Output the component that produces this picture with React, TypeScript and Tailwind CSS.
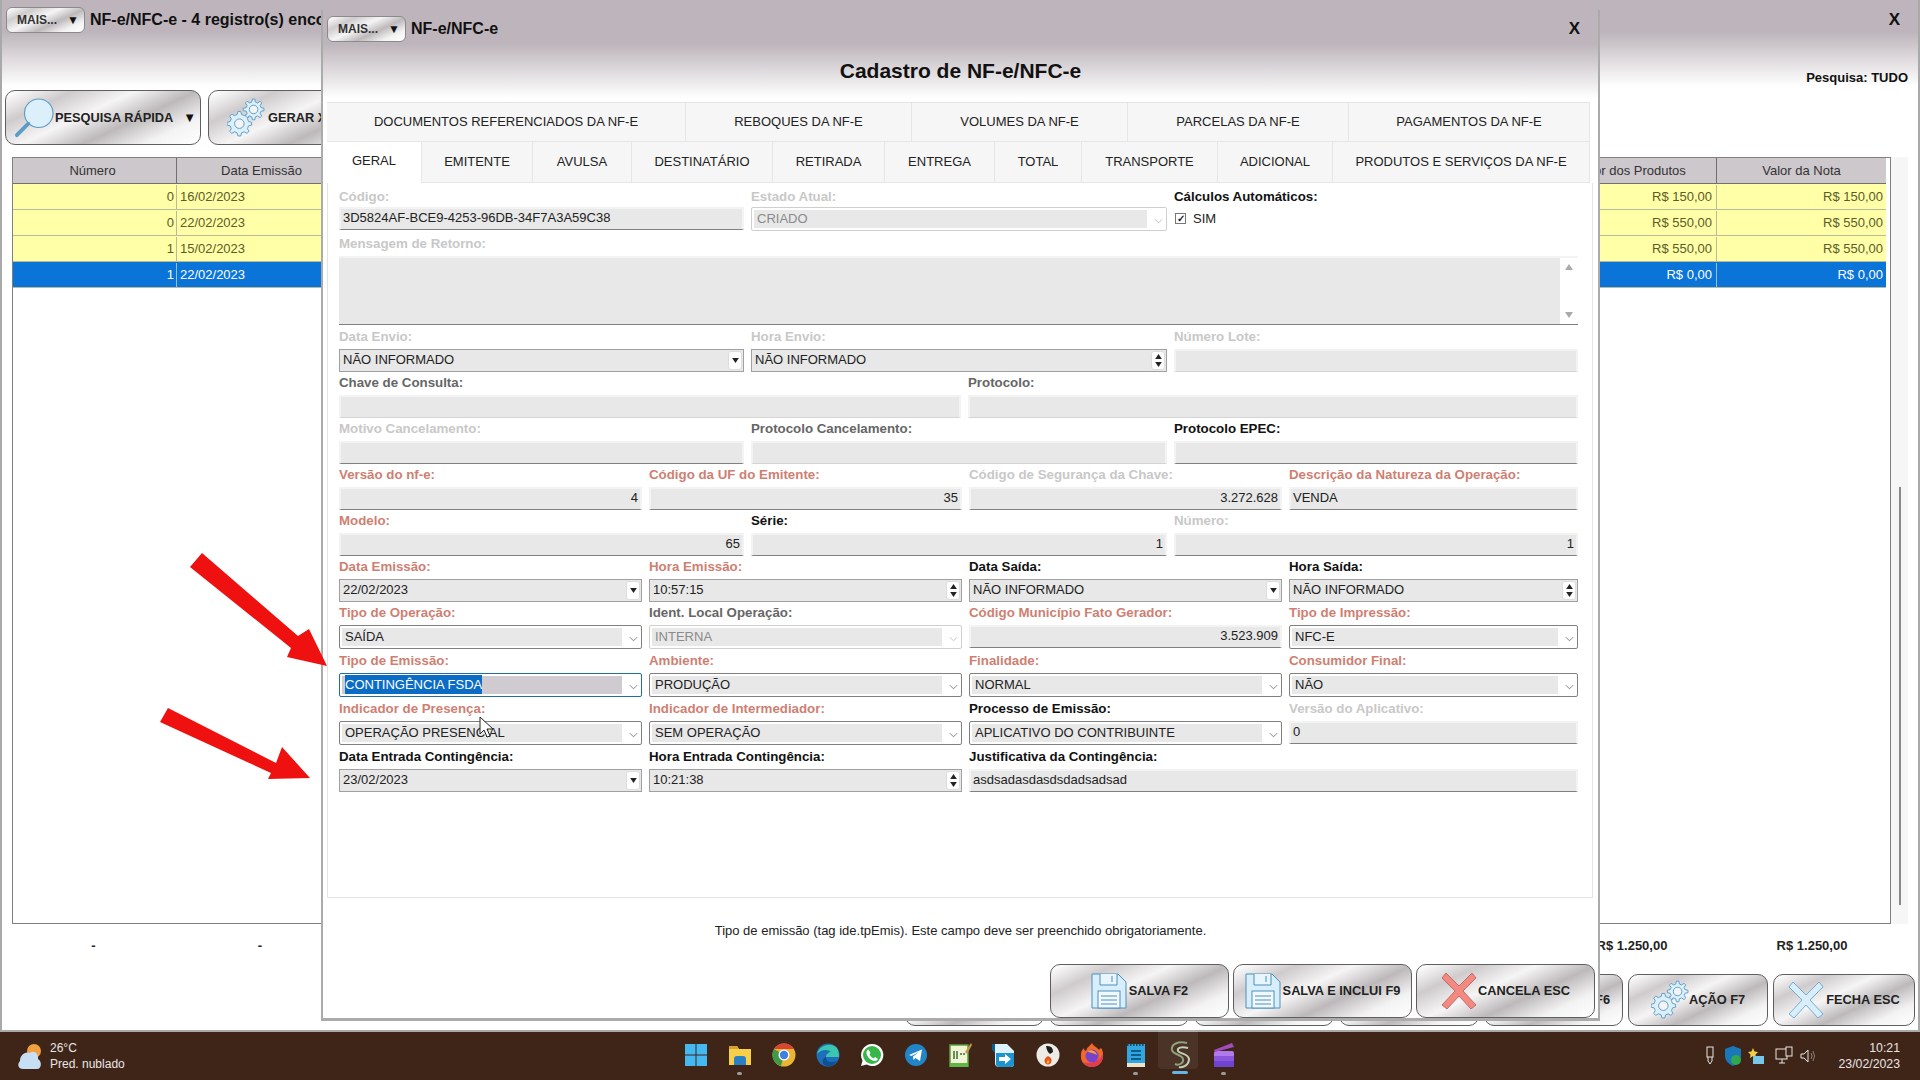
import React from "react";

const metal = "bg-[linear-gradient(155deg,#ffffff_2%,#cfcbcd_22%,#f6f5f5_42%,#bdb9bb_62%,#f4f3f3_82%,#ffffff_100%)]";

function gear(cx: number, cy: number, r: number, R: number, n: number) {
  let d = "";
  for (let i = 0; i < n; i++) {
    const s = (Math.PI * 2) / n;
    const a = i * s;
    const pts = [
      [a - s * 0.3, r],
      [a - s * 0.15, R],
      [a + s * 0.15, R],
      [a + s * 0.3, r],
    ];
    pts.forEach((p, j) => {
      const x = cx + Math.cos(p[0]) * p[1];
      const y = cy + Math.sin(p[0]) * p[1];
      d += (i === 0 && j === 0 ? "M" : "L") + x.toFixed(1) + " " + y.toFixed(1) + " ";
    });
  }
  return d + "Z";
}

function Gears() {
  return (
    <svg viewBox="0 0 40 42" className="w-[38px] h-[40px] shrink-0" fill="#dcf0fb" stroke="#5c9cc6" strokeWidth="1">
      <path d={gear(13, 27, 10, 13, 8)} />
      <circle cx="13" cy="27" r="5" fill="#f4f4f4" />
      <path d={gear(28, 12, 8, 11, 8)} />
      <circle cx="28" cy="12" r="4.5" fill="#f4f4f4" />
    </svg>
  );
}

function Floppy() {
  return (
    <svg viewBox="0 0 36 36" className="w-[36px] h-[36px] shrink-0" fill="#d8effb" stroke="#4d8fbd" strokeWidth="1">
      <path d="M1 1H27L35 9V35H1Z" />
      <path d="M9 1V12H26V1" fill="#e9f5fc" />
      <path d="M21 3V9" />
      <rect x="7" y="18" width="22" height="17" fill="#f2f9fd" />
      <path d="M10 23H26M10 27H26M10 31H26" />
    </svg>
  );
}

function XIcon({ fill, stroke }: { fill: string; stroke: string }) {
  return (
    <svg viewBox="0 0 36 36" className="w-[36px] h-[36px] shrink-0" fill={fill} stroke={stroke} strokeWidth="0.8">
      <path d="M5 0L18 13L31 0L35 5L22 18L35 32L30 36L18 23L6 36L1 32L14 18L1 5Z" />
    </svg>
  );
}

function Magnifier() {
  return (
    <svg viewBox="0 0 42 42" className="w-[40px] h-[40px] shrink-0" fill="#dcf0fb" stroke="#5c9cc6" strokeWidth="1.2">
      <circle cx="26" cy="16" r="15" />
      <path d="M15 27L3 39" strokeWidth="4" strokeLinecap="round" fill="none" />
    </svg>
  );
}

function MetalBtn({ className, children }: { className: string; children?: React.ReactNode }) {
  return (
    <div className={`${metal} border border-[#5f5f5f] rounded-[10px] flex items-center text-[12.8px] font-bold text-[#222] whitespace-nowrap overflow-hidden ${className}`}>
      {children}
    </div>
  );
}

function Mais({ className }: { className: string }) {
  return (
    <div className={`${metal} w-[79px] h-[26px] border border-[#8a8a8a] rounded-[6px] flex items-center justify-between pl-[10px] pr-[5px] text-[12px] font-bold text-[#333] shrink-0 ${className}`}>
      <span>MAIS...</span>
      <span className="text-[12px] text-[#111]">▼</span>
    </div>
  );
}

const labelTones: Record<string, string> = {
  r: "text-[#cf7f72]",
  g: "text-[#c8c8c8]",
  d: "text-[#666666]",
  k: "text-[#111111]",
};

function Label({ t, c, tight }: { t: string; c: string; tight?: boolean }) {
  return <div className={`${tight ? "h-[18px]" : "h-[20px]"} text-[13.3px] leading-[16px] font-bold whitespace-nowrap ${labelTones[c]}`}>{t}</div>;
}

function TextF({ l, c, v, right, soft, tight }: { l: string; c: string; v?: string; right?: boolean; soft?: boolean; tight?: boolean }) {
  return (
    <div>
      <Label t={l} c={c} tight={tight} />
      <div className={`h-[23px] bg-[#e8e8e8] border-t-2 border-x-2 border-[#f3f3f3] border-b ${soft ? "border-b-[#d4d4d4]" : "border-b-[#808080]"} flex items-center pb-[2px] px-[2px] text-[13px] text-[#222] ${right ? "justify-end" : ""}`}>
        {v}
      </div>
    </div>
  );
}

function Tri({ up }: { up?: boolean }) {
  return (
    <svg viewBox="0 0 8 6" className="w-[7px] h-[5px]">
      <path d={up ? "M4 0L8 6H0Z" : "M0 0H8L4 6Z"} fill="#222" />
    </svg>
  );
}

function Combo({ l, c, v, spin, soft }: { l: string; c: string; v: string; spin?: boolean; soft?: boolean }) {
  return (
    <div>
      <Label t={l} c={c} />
      <div className={`h-[23px] bg-[#e8e8e8] border ${soft ? "border-[#b0b0b0]" : "border-[#a0a0a0]"} flex items-center pl-[3px] pr-[1px] text-[13px] text-[#222]`}>
        <span className="flex-1 pb-[1px]">{v}</span>
        <div className="w-[14px] h-[19px] bg-white rounded-[3px] flex flex-col items-center justify-center gap-[3px] border border-[#dddddd]">
          {spin ? <Tri up /> : null}
          <Tri />
        </div>
      </div>
    </div>
  );
}

function Chevron({ color }: { color: string }) {
  return (
    <svg viewBox="0 0 10 6" className="w-[9px] h-[6px] mt-[4px]" fill="none" stroke={color} strokeWidth="1">
      <path d="M1 1L5 5L9 1" />
    </svg>
  );
}

function Sel({ l, c, v, disabled, focus, tight }: { l: string; c: string; v: string; disabled?: boolean; focus?: boolean; tight?: boolean }) {
  return (
    <div>
      <Label t={l} c={c} tight={tight} />
      <div className={`h-[24px] bg-white border rounded-[2px] flex items-stretch p-[2px] text-[13px] ${disabled ? "border-[#cfcfcf] text-[#8a8a8a]" : focus ? "border-[#1f6f9f] text-white" : "border-[#808080] text-[#222]"}`}>
        <div className={`flex-1 ${focus ? "bg-[#cfcbd0]" : "bg-[#e8e8e8]"} flex items-center pl-[3px] pb-[1px]`}>
          <span className={focus ? "bg-[#0b6cc6]" : ""}>{v}</span>
        </div>
        <div className="w-[17px] flex items-center justify-end pr-[1px]">
          <Chevron color={disabled ? "#c0c0c0" : "#777777"} />
        </div>
      </div>
    </div>
  );
}

function TabCell({ w, t, active }: { w: string; t: string; active?: boolean }) {
  return (
    <div className={`${w} h-full flex items-center justify-center border-r border-[#e6e6e6] text-[13px] text-[#222] whitespace-nowrap ${active ? "bg-white pb-[3px]" : "bg-[#f6f6f6] border-b border-b-[#e6e6e6]"}`}>
      {t}
    </div>
  );
}

function TableRow({ n, d, a, b, sel }: { n: string; d: string; a: string; b: string; sel?: boolean }) {
  const tone = sel ? "bg-[#0a74d8] text-white" : "bg-[#ffffa8] text-[#5c5c28]";
  return (
    <div className={`flex h-[26px] items-center pt-[1px] text-[13px] border-b border-[#b9b99c] ${tone}`}>
      <div className="w-[163px] text-right pr-[2px]">{n}</div>
      <div className={`w-[170px] h-full flex items-center pl-[3px] border-l ${sel ? "border-[#8fc0ee]" : "border-[#b9b99c]"}`}>{d}</div>
      <div className="flex-1" />
      <div className="w-[170px] text-right pr-[4px]">{a}</div>
      <div className={`w-[170px] h-full flex items-center justify-end pr-[3px] border-l ${sel ? "border-[#8fc0ee]" : "border-[#b9b99c]"}`}>{b}</div>
    </div>
  );
}

function Task({ children, dot, active }: { children: React.ReactNode; dot?: boolean; active?: boolean }) {
  return (
    <div className={`relative w-[24px] h-[24px] flex items-center justify-center shrink-0`}>
      {active ? <div className="absolute left-[-10px] top-[-14px] w-[40px] h-[40px] bg-[#ffffff12] rounded-[4px]" /> : null}
      <div className="relative">{children}</div>
      {dot ? <div className="absolute left-[9px] top-[29px] w-[5px] h-[3px] rounded-full bg-[#9a9a9a]" /> : null}
      {active ? <div className="absolute left-[4px] top-[28px] w-[16px] h-[3px] rounded-full bg-[#63b5e6]" /> : null}
    </div>
  );
}

const I = "w-[24px] h-[24px]";

export default function App() {
  return (
    <div className="relative w-[1920px] h-[1080px] overflow-hidden bg-white font-[Liberation_Sans,Arial,sans-serif] text-[#222]">
      {/* main window */}
      <div className="h-[1032px] border-2 border-t-0 border-[#a9a9a9] bg-[linear-gradient(#bdb5bb_0px,#bdb5bb_32px,#ffffff_86px)] flex flex-col">
        <div className="flex items-center pt-[7px] pl-[4px] pr-[18px] h-[33px]">
          <Mais className="" />
          <span className="ml-[5px] text-[16px] font-bold text-[#111] whitespace-nowrap">NF-e/NFC-e - 4 registro(s) encontrado(s)</span>
          <span className="ml-auto text-[17px] font-bold text-[#111]">X</span>
        </div>
        <div className="h-[57px] flex items-end justify-end pb-[3px] pr-[10px] text-[13px] font-bold text-[#111]">Pesquisa: TUDO</div>
        <div className="flex gap-[7px] pl-[3px] h-[55px]">
          <MetalBtn className="w-[196px] h-[55px] pl-[8px]">
            <Magnifier />
            <span className="ml-[1px]">PESQUISA RÁPIDA</span>
            <span className="ml-[10px] text-[13px] text-[#111]">▼</span>
          </MetalBtn>
          <MetalBtn className="w-[200px] h-[55px] pl-[18px]">
            <Gears />
            <span className="ml-[3px]">GERAR XML</span>
          </MetalBtn>
        </div>
        <div className="flex mt-[12px] h-[767px] pl-[10px]">
          <div className="w-[1879px] border border-[#808080] bg-white pr-[4px]">
            <div className="flex h-[26px] items-center bg-[#cdc8cc] text-[13px] text-[#333] border-b border-[#707070]">
              <div className="w-[163px] text-center pr-[4px]">Número</div>
              <div className="w-[170px] h-full flex items-center justify-center border-l border-[#707070]">Data Emissão</div>
              <div className="flex-1" />
              <div className="w-[170px] text-center">Valor dos Produtos</div>
              <div className="w-[170px] h-full flex items-center justify-center border-l border-[#707070]">Valor da Nota</div>
            </div>
            <TableRow n="0" d="16/02/2023" a="R$ 150,00" b="R$ 150,00" />
            <TableRow n="0" d="22/02/2023" a="R$ 550,00" b="R$ 550,00" />
            <TableRow n="1" d="15/02/2023" a="R$ 550,00" b="R$ 550,00" />
            <TableRow n="1" d="22/02/2023" a="R$ 0,00" b="R$ 0,00" sel />
          </div>
          <div className="w-[17px] bg-[#f6f6f6] flex justify-center">
            <div className="w-[2px] h-[418px] mt-[330px] bg-[#8a8a8a]" />
          </div>
        </div>
        <div className="flex h-[44px] items-center pl-[10px] pr-[31px] text-[13px] font-bold text-[#222]">
          <div className="w-[163px] text-center">-</div>
          <div className="w-[170px] text-center">-</div>
          <div className="flex-1" />
          <div className="w-[170px] text-center">R$ 1.250,00</div>
          <div className="w-[170px] text-center pl-[20px]">R$ 1.250,00</div>
        </div>
        <div className="flex justify-end gap-[5px] pr-[3px] mt-[6px]">
          <MetalBtn className="w-[139px] h-[52px] justify-center">ALTERA</MetalBtn>
          <MetalBtn className="w-[140px] h-[52px] justify-center">EXCLUI</MetalBtn>
          <MetalBtn className="w-[140px] h-[52px] justify-center">CONSULTA</MetalBtn>
          <MetalBtn className="w-[140px] h-[52px] justify-center">FILTRO</MetalBtn>
          <MetalBtn className="w-[139px] h-[52px] justify-end pr-[12px]">F6</MetalBtn>
          <MetalBtn className="w-[140px] h-[52px] justify-center">
            <Gears />
            <span>AÇÃO F7</span>
          </MetalBtn>
          <MetalBtn className="w-[142px] h-[52px] justify-center">
            <XIcon fill="#d8eefa" stroke="#5c9cc6" />
            <span className="ml-[2px]">FECHA ESC</span>
          </MetalBtn>
        </div>
      </div>

      {/* taskbar */}
      <div className="h-[48px] bg-[#3f2418] flex items-center relative">
        <div className="flex items-center pl-[17px] w-[684px]">
          <svg viewBox="0 0 26 28" className="w-[26px] h-[28px] shrink-0">
            <circle cx="17" cy="9" r="7" fill="#f0a040" />
            <path d="M6 27C1 27 0 22 3 19C3 13 8 9 13 11C16 8 22 11 21 17C25 19 25 27 20 27Z" fill="#c6dff2" />
          </svg>
          <div className="ml-[7px] text-[12px] leading-[16px] text-[#e8e6e4]">
            <div>26°C</div>
            <div>Pred. nublado</div>
          </div>
        </div>
        <div className="flex items-center gap-[20px] mt-[-2px]">
          <Task>
            <svg viewBox="0 0 24 24" className={I} fill="#45b8f2">
              <rect x="1" y="1" width="10.5" height="10.5" />
              <rect x="12.5" y="1" width="10.5" height="10.5" />
              <rect x="1" y="12.5" width="10.5" height="10.5" />
              <rect x="12.5" y="12.5" width="10.5" height="10.5" />
            </svg>
          </Task>
          <Task dot>
            <svg viewBox="0 0 24 24" className={I}>
              <path d="M1 3H9L11 6H23V22H1Z" fill="#f7cf4a" />
              <path d="M1 3H9L11 6H1Z" fill="#d8a032" />
              <path d="M6 16Q6 13 9 13H15Q18 13 18 16V22H6Z" fill="#2b7fc4" />
            </svg>
          </Task>
          <Task>
            <svg viewBox="0 0 24 24" className={I}>
              <circle cx="12" cy="12" r="11.5" fill="#e8b630" />
              <path d="M12 .5A11.5 11.5 0 0 1 22 6H12Z" fill="#d84535" />
              <path d="M2 6A11.5 11.5 0 0 0 9 23L12 12Z" fill="#3f9a48" />
              <path d="M2 6A11.5 11.5 0 0 1 12 .5V6Z" fill="#d84535" />
              <circle cx="12" cy="12" r="5.5" fill="#fff" />
              <circle cx="12" cy="12" r="4.2" fill="#3f81e0" />
            </svg>
          </Task>
          <Task>
            <svg viewBox="0 0 24 24" className={I}>
              <circle cx="12" cy="12" r="11.5" fill="#1c6fb8" />
              <path d="M1 11C3 3 13-1 20 4C23 7 23 12 23 14H10C10 11 13 9 15 9C12 6 5 6 1 11Z" fill="#3cc6b0" />
              <path d="M10 14C10 19 15 20 21 18C18 23 13 24 10 23C5 21 6 15 10 14Z" fill="#0f4f94" />
            </svg>
          </Task>
          <Task>
            <svg viewBox="0 0 24 24" className={I}>
              <path d="M12 1A11 11 0 0 0 2.5 17.5L1 23L6.8 21.5A11 11 0 1 0 12 1Z" fill="#ffffff" />
              <circle cx="12" cy="12" r="9" fill="#37b74a" />
              <path d="M8.5 6.5L10.5 10L9.5 11.5C10.5 13.5 12 14.5 13.5 15.5L15 14L18 16C17 18 15 18.5 12.5 17.5C9 16 7 13 6.5 10.5C6.3 8.5 7 7 8.5 6.5Z" fill="#fff" />
            </svg>
          </Task>
          <Task>
            <svg viewBox="0 0 24 24" className={I}>
              <circle cx="12" cy="12" r="11" fill="#2186c9" />
              <path d="M5 12L18 6.5L16 18L11.5 15L9.5 17L9 13.5L15 9L7.5 13Z" fill="#ffffff" />
            </svg>
          </Task>
          <Task>
            <svg viewBox="0 0 24 24" className={I}>
              <rect x="2" y="2" width="18" height="22" fill="#f0f4d4" stroke="#5aa03c" strokeWidth="1.5" />
              <rect x="2" y="20" width="18" height="4" fill="#5fb548" />
              <path d="M6 8V16M9 8V16M12 11H14M15 11H17" stroke="#3c6e34" strokeWidth="1.5" />
              <path d="M17 9L23 0L24 2L19 11Z" fill="#c29a4a" />
            </svg>
          </Task>
          <Task>
            <svg viewBox="0 0 24 24" className={I}>
              <path d="M3 1H15L22 8V21Q22 24 19 24H7Q3 24 3 20Z" fill="#ddf3fb" />
              <path d="M4 10H22V21Q22 24 19 24H7Q4 24 4 21Z" fill="#1d93d0" />
              <path d="M7 14H13V11L19 16L13 21V18H7Z" fill="#ffffff" />
              <path d="M3 1V10L0 7V1Z" fill="#0c5d8f" />
            </svg>
          </Task>
          <Task>
            <svg viewBox="0 0 24 24" className={I}>
              <circle cx="12" cy="12" r="11.5" fill="#ecebe6" />
              <path d="M10 3Q17 2 17 9L14 11Q11 9 10 3Z" fill="#1e1e1e" />
              <path d="M12 13Q17 15 15 20Q12 23 9 20Q7 16 12 13Z" fill="#e8541e" />
              <path d="M12 17Q14 18 13 20Q11 21 10.500 19.500Z" fill="#ffc13a" />
            </svg>
          </Task>
          <Task>
            <svg viewBox="0 0 24 24" className={I}>
              <path d="M12 0C13 3 17 4 19 7C21 4 22 5 23 10C24 19 18 24 12 24C5 24 0 19 1 11C1 8 3 6 4 5C4 7 5 8 6 8C7 4 10 3 12 0Z" fill="#f2682c" />
              <path d="M23 11C24 19 18 24 12 24C8 24 5 22 3 19C9 21 18 20 23 11Z" fill="#e23c50" />
              <circle cx="12" cy="13" r="6.500" fill="#7a42c8" />
              <path d="M7 8C11 6 16 8 17 12C14 10 10 10 7 8Z" fill="#f9a32e" />
            </svg>
          </Task>
          <Task dot>
            <svg viewBox="0 0 24 24" className={I}>
              <rect x="3" y="1" width="18" height="23" fill="#31a7dd" />
              <rect x="3" y="20" width="18" height="4" fill="#eee3c8" />
              <path d="M3 2H21" stroke="#16425e" strokeWidth="2" strokeDasharray="1.500 1.500" />
              <path d="M7 8H17M7 12H17M7 16H17" stroke="#0f5d8c" strokeWidth="2" />
            </svg>
          </Task>
          <Task active>
            <svg viewBox="0 0 24 28" className="w-[24px] h-[28px]" fill="none" stroke="#8ea17f" strokeWidth="2">
              <path d="M19 2C10 0 3 3 4 9C5 14 14 13 15 18C16 22 11 25 7 23" />
              <path d="M20 7C13 5 9 7 10 10C11 13 20 12 21 18C21 24 15 27 11 26" stroke="#c3cfb6" />
            </svg>
          </Task>
          <Task dot>
            <svg viewBox="0 0 24 24" className={I}>
              <rect x="2" y="8" width="20" height="16" rx="2" fill="#b07ae8" />
              <rect x="2" y="13" width="20" height="5" fill="#8e56dc" />
              <rect x="2" y="18" width="20" height="6" fill="#6f45d0" />
              <path d="M2 7L20 0L22 4L3 9Z" fill="#a04dbd" />
            </svg>
          </Task>
        </div>
        <div className="absolute right-[20px] top-0 h-full flex items-center text-[#e8e6e4]">
          <svg viewBox="0 0 10 20" className="w-[10px] h-[20px] mr-[10px]" fill="none" stroke="#e8e6e4" strokeWidth="1">
            <rect x="2" y="1" width="6" height="10" />
            <path d="M3 11V15L5 18L7 15V11" />
          </svg>
          <svg viewBox="0 0 16 20" className="w-[16px] h-[20px] mr-[7px]">
            <path d="M8 0L16 3V10Q16 16 8 20Q0 16 0 10V3Z" fill="#1b78b8" />
            <circle cx="11" cy="14" r="5" fill="#2fa84f" />
          </svg>
          <svg viewBox="0 0 16 16" className="w-[16px] h-[16px] mr-[11px]">
            <path d="M5 0L6.500 3.500L10 4L7.500 6.500L8 10L5 8L2 10L2.500 6.500L0 4L3.500 3.500Z" fill="#f2cf4a" />
            <rect x="5" y="8" width="11" height="8" fill="#79c7e8" />
          </svg>
          <svg viewBox="0 0 18 20" className="w-[18px] h-[20px] mr-[7px]" fill="none" stroke="#e8e6e4" strokeWidth="1">
            <rect x="1" y="3" width="11" height="10" />
            <path d="M4 17H10M7 13V17" />
            <rect x="11" y="1" width="6" height="9" fill="#3f2418" />
          </svg>
          <svg viewBox="0 0 16 16" className="w-[16px] h-[16px] mr-[22px]" fill="none" stroke="#e8e6e4" strokeWidth="1">
            <path d="M1 6H4L8 2V14L4 10H1Z" />
            <path d="M11 5Q13 8 11 11M13 3Q16 8 13 13" stroke="#8d8078" />
          </svg>
          <div className="text-[12.3px] leading-[16px] text-right">
            <div>10:21</div>
            <div>23/02/2023</div>
          </div>
        </div>
      </div>

      {/* modal */}
      <div className="absolute left-[321px] top-[10px] w-[1279px] h-[1011px] border-x-2 border-b-[3px] border-[#ababab] border-t-0 bg-[linear-gradient(#bdb5bb_0px,#bdb5bb_34px,#ffffff_88px)] flex flex-col">
        <div className="flex items-center pt-[6px] pl-[4px] pr-[18px] h-[31px]">
          <Mais className="" />
          <span className="ml-[5px] text-[16px] font-bold text-[#111]">NF-e/NFC-e</span>
          <span className="ml-auto text-[17px] font-bold text-[#111]">X</span>
        </div>
        <div className="h-[61px] flex items-center justify-center pb-[2px] text-[21px] font-bold text-[#111]">Cadastro de NF-e/NFC-e</div>

        {/* tabs */}
        <div className="ml-[4px] w-[1263px] border-t border-[#e4e4e4]">
          <div className="flex h-[39px]">
            <TabCell w="w-[359px]" t="DOCUMENTOS REFERENCIADOS DA NF-E" />
            <TabCell w="w-[226px]" t="REBOQUES DA NF-E" />
            <TabCell w="w-[216px]" t="VOLUMES DA NF-E" />
            <TabCell w="w-[221px]" t="PARCELAS DA NF-E" />
            <TabCell w="w-[241px]" t="PAGAMENTOS DA NF-E" />
          </div>
          <div className="flex h-[41px]">
            <TabCell w="w-[95px]" t="GERAL" active />
            <TabCell w="w-[111px]" t="EMITENTE" />
            <TabCell w="w-[99px]" t="AVULSA" />
            <TabCell w="w-[141px]" t="DESTINATÁRIO" />
            <TabCell w="w-[112px]" t="RETIRADA" />
            <TabCell w="w-[110px]" t="ENTREGA" />
            <TabCell w="w-[87px]" t="TOTAL" />
            <TabCell w="w-[136px]" t="TRANSPORTE" />
            <TabCell w="w-[115px]" t="ADICIONAL" />
            <TabCell w="w-[257px]" t="PRODUTOS E SERVIÇOS DA NF-E" />
          </div>
        </div>

        {/* panel */}
        <div className="ml-[4px] w-[1266px] h-[715px] border border-t-0 border-[#e4e4e4] bg-white pl-[11px] pt-[6px]">
          <div className="w-[1239px]">
            <div className="grid grid-cols-[405px_416px_404px] gap-x-[7px]">
              <TextF l="Código:" c="g" v="3D5824AF-BCE9-4253-96DB-34F7A3A59C38" tight />
              <Sel l="Estado Atual:" c="g" v="CRIADO" disabled tight />
              <div>
                <Label t="Cálculos Automáticos:" c="k" tight />
                <div className="h-[23px] flex items-center text-[13px] text-[#222]">
                  <div className="ml-[1px] w-[11px] h-[11px] border border-[#777] bg-white flex items-center justify-center text-[10px] leading-none font-bold">✓</div>
                  <span className="ml-[7px]">SIM</span>
                </div>
              </div>
            </div>

            <div className="mt-[5px]">
              <Label t="Mensagem de Retorno:" c="g" />
              <div className="h-[69px] flex border-t-2 border-[#f3f3f3] border-b border-b-[#808080]">
                <div className="flex-1 bg-[#e8e8e8]" />
                <div className="w-[18px] bg-white flex flex-col items-center justify-between py-[6px]">
                  <svg viewBox="0 0 8 6" className="w-[8px] h-[6px]"><path d="M4 0L8 6H0Z" fill="#aaaaaa" /></svg>
                  <svg viewBox="0 0 8 6" className="w-[8px] h-[6px]"><path d="M0 0H8L4 6Z" fill="#aaaaaa" /></svg>
                </div>
              </div>
            </div>

            <div className="grid grid-cols-[405px_416px_404px] gap-x-[7px] mt-[4px]">
              <Combo l="Data Envio:" c="g" v="NÃO INFORMADO" />
              <Combo l="Hora Envio:" c="g" v="NÃO INFORMADO" spin />
              <TextF l="Número Lote:" c="g" soft />
            </div>
            <div className="grid grid-cols-[622px_610px] gap-x-[7px] mt-[3px]">
              <TextF l="Chave de Consulta:" c="d" soft />
              <TextF l="Protocolo:" c="d" soft />
            </div>
            <div className="grid grid-cols-[405px_416px_404px] gap-x-[7px] mt-[3px]">
              <TextF l="Motivo Cancelamento:" c="g" />
              <TextF l="Protocolo Cancelamento:" c="d" soft />
              <TextF l="Protocolo EPEC:" c="k" />
            </div>
            <div className="grid grid-cols-[303px_313px_313px_289px] gap-x-[7px] mt-[3px]">
              <TextF l="Versão do nf-e:" c="r" v="4" right />
              <TextF l="Código da UF do Emitente:" c="r" v="35" right />
              <TextF l="Código de Segurança da Chave:" c="g" v="3.272.628" right />
              <TextF l="Descrição da Natureza da Operação:" c="r" v="VENDA" />
            </div>
            <div className="grid grid-cols-[405px_416px_404px] gap-x-[7px] mt-[3px]">
              <TextF l="Modelo:" c="r" v="65" right />
              <TextF l="Série:" c="k" v="1" right />
              <TextF l="Número:" c="g" v="1" right />
            </div>
            <div className="grid grid-cols-[303px_313px_313px_289px] gap-x-[7px] mt-[3px]">
              <Combo l="Data Emissão:" c="r" v="22/02/2023" />
              <Combo l="Hora Emissão:" c="r" v="10:57:15" spin />
              <Combo l="Data Saída:" c="k" v="NÃO INFORMADO" />
              <Combo l="Hora Saída:" c="k" v="NÃO INFORMADO" spin />
            </div>
            <div className="grid grid-cols-[303px_313px_313px_289px] gap-x-[7px] mt-[3px]">
              <Sel l="Tipo de Operação:" c="r" v="SAÍDA" />
              <Sel l="Ident. Local Operação:" c="d" v="INTERNA" disabled />
              <TextF l="Código Município Fato Gerador:" c="r" v="3.523.909" right />
              <Sel l="Tipo de Impressão:" c="r" v="NFC-E" />
            </div>
            <div className="grid grid-cols-[303px_313px_313px_289px] gap-x-[7px] mt-[4px]">
              <Sel l="Tipo de Emissão:" c="r" v="CONTINGÊNCIA FSDA" focus />
              <Sel l="Ambiente:" c="r" v="PRODUÇÃO" />
              <Sel l="Finalidade:" c="r" v="NORMAL" />
              <Sel l="Consumidor Final:" c="r" v="NÃO" />
            </div>
            <div className="grid grid-cols-[303px_313px_313px_289px] gap-x-[7px] mt-[4px]">
              <Sel l="Indicador de Presença:" c="r" v="OPERAÇÃO PRESENCIAL" />
              <Sel l="Indicador de Intermediador:" c="r" v="SEM OPERAÇÃO" />
              <Sel l="Processo de Emissão:" c="k" v="APLICATIVO DO CONTRIBUINTE" />
              <TextF l="Versão do Aplicativo:" c="g" v="0" />
            </div>
            <div className="grid grid-cols-[303px_313px_609px] gap-x-[7px] mt-[4px]">
              <Combo l="Data Entrada Contingência:" c="k" v="23/02/2023" />
              <Combo l="Hora Entrada Contingência:" c="k" v="10:21:38" spin />
              <TextF l="Justificativa da Contingência:" c="k" v="asdsadasdasdsdadsadsad" />
            </div>
          </div>
        </div>

        <div className="h-[66px] flex items-center justify-center text-[13px] text-[#222]">
          Tipo de emissão (tag ide.tpEmis). Este campo deve ser preenchido obrigatoriamente.
        </div>
        <div className="flex justify-end gap-[4px] pr-[3px]">
          <MetalBtn className="w-[179px] h-[54px] justify-center">
            <Floppy />
            <span className="ml-[2px]">SALVA F2</span>
          </MetalBtn>
          <MetalBtn className="w-[179px] h-[54px] justify-center">
            <Floppy />
            <span className="ml-[2px]">SALVA E INCLUI F9</span>
          </MetalBtn>
          <MetalBtn className="w-[179px] h-[54px] justify-center">
            <XIcon fill="#f28a82" stroke="#b85a55" />
            <span className="ml-[1px]">CANCELA ESC</span>
          </MetalBtn>
        </div>
      </div>

      {/* annotations over the screenshot */}
      <svg className="absolute inset-0 w-[1920px] h-[1080px] pointer-events-none" viewBox="0 0 1920 1080">
        <path d="M190 567L202 553L298 636L309 629L327 666L287 657L291 648Z" fill="#ef1010" />
        <path d="M160 722L168 708L276 763L282 747L310 778L268 779L271 773Z" fill="#ef1010" />
        <path d="M480 717V734L484 730L487 737L490 736L487 729H493Z" fill="#ffffff" stroke="#222222" strokeWidth="1" />
      </svg>
    </div>
  );
}
